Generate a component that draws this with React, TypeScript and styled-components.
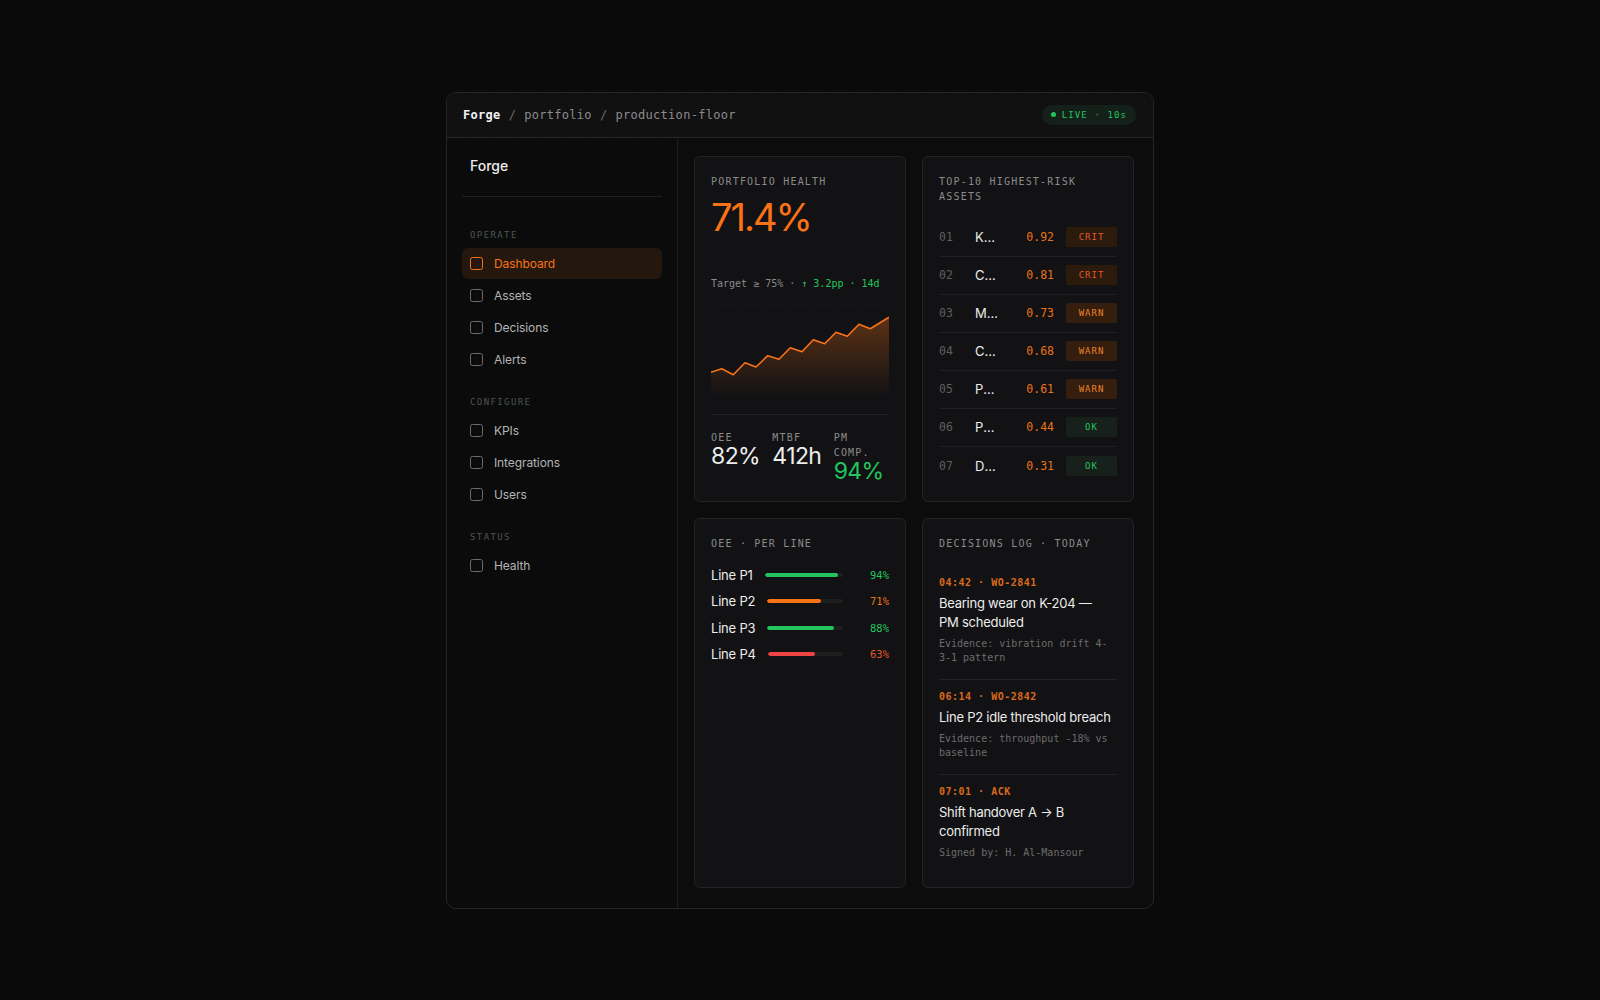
import styled, { createGlobalStyle } from 'styled-components';

const MONO = `'DejaVu Sans Mono', 'Liberation Mono', monospace`;

const GlobalStyle = createGlobalStyle`
  html, body {
    margin: 0;
    padding: 0;
    background: #0a0a0a;
  }
  body {
    font-family: Inter, 'Noto Sans', sans-serif;
    -webkit-font-smoothing: antialiased;
  }
  * {
    box-sizing: border-box;
  }
`;

const Page = styled.div`
  width: 100vw;
  height: 100vh;
  display: flex;
  align-items: center;
  justify-content: center;
`;

const Window = styled.div`
  width: 708px;
  height: 817px;
  display: flex;
  flex-direction: column;
  background: #0c0c0d;
  border: 1px solid #252926;
  border-radius: 10px;
  overflow: hidden;
`;

const TopBar = styled.div`
  height: 45px;
  flex-shrink: 0;
  display: flex;
  align-items: center;
  justify-content: space-between;
  padding: 0 17px 0 16px;
  border-bottom: 1px solid #232624;
  background: radial-gradient(rgba(255, 255, 255, 0.025) 0.7px, transparent 0.9px) 0 0 / 3px 3px,
    #101011;
`;

const Crumbs = styled.div`
  font-family: ${MONO};
  font-size: 12px;
  letter-spacing: 0.3px;
  color: #8c8c8c;
  b {
    color: #f2f2f2;
    font-weight: 700;
  }
  span {
    color: #6a6a6a;
    margin: 0 8px;
  }
`;

const LivePill = styled.div`
  height: 20px;
  display: flex;
  align-items: center;
  gap: 6px;
  padding: 0 9px;
  border-radius: 10px;
  background: #14211a;
  font-family: ${MONO};
  font-size: 9px;
  letter-spacing: 1.1px;
  color: #22c55e;
`;

const Dot = styled.i`
  width: 5px;
  height: 5px;
  border-radius: 50%;
  background: #22c55e;
`;

const Body = styled.div`
  flex: 1;
  display: flex;
  min-height: 0;
`;

const Sidebar = styled.aside`
  width: 231px;
  flex-shrink: 0;
  padding: 0 15px;
  border-right: 1px solid #1c1e1d;
  background: #0b0b0c;
`;

const Brand = styled.div`
  padding: 18px 8px 20px;
  font-size: 14px;
  line-height: 20px;
  font-weight: 500;
  color: #ececec;
  border-bottom: 1px solid #1f2120;
`;

const Nav = styled.nav`
  padding-top: 32px;
`;

const SectionLabel = styled.div<{ $first?: boolean }>`
  font-family: ${MONO};
  font-size: 9px;
  line-height: 12px;
  letter-spacing: 1.4px;
  color: #4c5650;
  padding-left: 8px;
  margin: ${(p) => (p.$first ? '0' : '21px')} 0 7px;
`;

const NavItem = styled.div<{ $active?: boolean }>`
  height: 31px;
  margin-bottom: 1px;
  display: flex;
  align-items: center;
  gap: 11px;
  padding: 0 8px;
  border-radius: 6px;
  font-size: 12px;
  letter-spacing: -0.1px;
  color: ${(p) => (p.$active ? '#f97316' : '#b3b3b3')};
  background: ${(p) => (p.$active ? '#24170e' : 'transparent')};
`;

const Box = styled.span<{ $active?: boolean }>`
  width: 13px;
  height: 13px;
  border-radius: 2.5px;
  border: 1.4px solid ${(p) => (p.$active ? '#f97316' : '#6b6b6b')};
`;

const Main = styled.main`
  flex: 1;
  min-height: 0;
  display: grid;
  grid-template-columns: 1fr 1fr;
  grid-template-rows: auto minmax(0, 1fr);
  gap: 16px;
  padding: 18px 19px 20px 16px;
`;

const Card = styled.section`
  display: flex;
  flex-direction: column;
  min-height: 0;
  padding: 17px 16px 16px;
  background: #121214;
  border: 1px solid #222325;
  border-radius: 6px;
`;

const CardLabel = styled.div`
  font-family: ${MONO};
  font-size: 10px;
  line-height: 15px;
  letter-spacing: 1.2px;
  color: #8b8b8b;
`;

const BigNumber = styled.div`
  margin-top: 9px;
  font-size: 38px;
  line-height: 1;
  letter-spacing: -2px;
  color: #f97316;
`;

const TargetLine = styled.div`
  margin-top: 41px;
  font-family: ${MONO};
  font-size: 10px;
  line-height: 14px;
  color: #8a8a8a;
  em {
    font-style: normal;
    color: #22c55e;
  }
`;

const Chart = styled.svg`
  display: block;
  margin-top: 13px;
  width: 100%;
  height: 92px;
`;

const Stats = styled.div`
  margin-top: 18px;
  padding-top: 15px;
  border-top: 1px solid #242526;
  display: grid;
  grid-template-columns: 1fr 1fr 1fr;
  gap: 6px;
  align-items: start;
`;

const StatLabel = styled.div`
  font-family: ${MONO};
  font-size: 10px;
  line-height: 15px;
  letter-spacing: 1.2px;
  color: #8b8b8b;
`;

const StatValue = styled.div<{ $tone?: string }>`
  font-size: 23px;
  line-height: 1;
  letter-spacing: -0.6px;
  color: ${(p) => p.$tone || '#ededed'};
`;

const RiskList = styled.div`
  margin-top: 15px;
`;

const RiskRow = styled.div`
  height: 38px;
  display: grid;
  grid-template-columns: 24px 22px 1fr 51px;
  column-gap: 12px;
  align-items: center;
  border-bottom: 1px solid #1f2021;
  &:last-child {
    border-bottom: none;
  }
`;

const RiskIndex = styled.span`
  font-family: ${MONO};
  font-size: 11.5px;
  color: #5e5e5e;
`;

const RiskName = styled.span`
  font-size: 13px;
  color: #ececec;
  white-space: nowrap;
  overflow: hidden;
  text-overflow: ellipsis;
`;

const RiskScore = styled.span`
  font-family: ${MONO};
  font-size: 11.5px;
  color: #ea7319;
  text-align: right;
`;

const badgeTones: Record<string, { bg: string; fg: string }> = {
  CRIT: { bg: '#34200f', fg: '#e4572b' },
  WARN: { bg: '#3f240f', fg: '#f0822a' },
  OK: { bg: '#1b2620', fg: '#22c55e' },
};

const Badge = styled.span<{ $level: string }>`
  height: 20px;
  display: flex;
  align-items: center;
  justify-content: center;
  border-radius: 2px;
  font-family: ${MONO};
  font-size: 9px;
  letter-spacing: 1px;
  color: ${(p) => badgeTones[p.$level].fg};
  background: radial-gradient(rgba(0, 0, 0, 0.25) 0.6px, transparent 0.9px) 0 0 / 2px 2px,
    ${(p) => badgeTones[p.$level].bg};
`;

const LineList = styled.div`
  margin-top: 14px;
  display: flex;
  flex-direction: column;
  gap: 6.5px;
`;

const LineRow = styled.div`
  height: 20px;
  display: flex;
  align-items: center;
  gap: 12px;
`;

const LineName = styled.span`
  font-size: 13px;
  letter-spacing: -0.2px;
  color: #ececec;
  white-space: nowrap;
`;

const Track = styled.div`
  flex: 1;
  height: 4px;
  border-radius: 2px;
  background: #1d1f1e;
  overflow: hidden;
`;

const Fill = styled.div<{ $color: string }>`
  height: 100%;
  border-radius: 2px;
  background: ${(p) => p.$color};
`;

const LinePct = styled.span<{ $color: string }>`
  width: 34px;
  text-align: right;
  font-family: ${MONO};
  font-size: 10.5px;
  color: ${(p) => p.$color};
`;

const LogList = styled.div`
  margin-top: 15px;
`;

const LogEntry = styled.div`
  padding: 10px 0 13px;
  border-bottom: 1px solid #232425;
  &:last-child {
    border-bottom: none;
  }
`;

const LogMeta = styled.div`
  font-family: ${MONO};
  font-size: 10px;
  line-height: 14px;
  letter-spacing: 0.5px;
  font-weight: 700;
  color: #d9691c;
`;

const LogTitle = styled.div`
  margin-top: 4px;
  padding-right: 4px;
  font-size: 13px;
  line-height: 19px;
  letter-spacing: -0.25px;
  color: #ececec;
`;

const LogNote = styled.div`
  margin-top: 5px;
  font-family: ${MONO};
  font-size: 10px;
  line-height: 14.5px;
  color: #6c6c6c;
`;

const sections = [
  { label: 'OPERATE', items: ['Dashboard', 'Assets', 'Decisions', 'Alerts'] },
  { label: 'CONFIGURE', items: ['KPIs', 'Integrations', 'Users'] },
  { label: 'STATUS', items: ['Health'] },
];

const risks = [
  { id: '01', name: 'Kneader K-204', score: '0.92', level: 'CRIT' },
  { id: '02', name: 'Compressor C-11', score: '0.81', level: 'CRIT' },
  { id: '03', name: 'Mixer M-07', score: '0.73', level: 'WARN' },
  { id: '04', name: 'Conveyor C-3', score: '0.68', level: 'WARN' },
  { id: '05', name: 'Press P-12', score: '0.61', level: 'WARN' },
  { id: '06', name: 'Pump P-02', score: '0.44', level: 'OK' },
  { id: '07', name: 'Dryer D-1', score: '0.31', level: 'OK' },
];

const lines = [
  { name: 'Line P1', pct: 94, bar: '#22c55e', text: '#22c55e' },
  { name: 'Line P2', pct: 71, bar: '#f97316', text: '#ea7319' },
  { name: 'Line P3', pct: 88, bar: '#22c55e', text: '#22c55e' },
  { name: 'Line P4', pct: 63, bar: '#ef4444', text: '#e4572b' },
];

const decisions = [
  {
    meta: '04:42 · WO-2841',
    title: 'Bearing wear on K-204 — PM scheduled',
    note: 'Evidence: vibration drift 4-3-1 pattern',
  },
  {
    meta: '06:14 · WO-2842',
    title: 'Line P2 idle threshold breach',
    note: 'Evidence: throughput -18% vs baseline',
  },
  {
    meta: '07:01 · ACK',
    title: 'Shift handover A → B confirmed',
    note: 'Signed by: H. Al-Mansour',
  },
];

const trend = [
  [0, 68.3], [10.7, 64.7], [22.3, 70.7], [34, 58.7], [45, 63], [56.7, 51.7],
  [68, 55.3], [79.3, 43.7], [91, 47.7], [102.3, 35.7], [113.7, 39.7], [125, 28.3],
  [136.3, 32.3], [148, 20.3], [159.3, 24.7], [178, 13.3],
];

const HealthChart = () => {
  const line = trend.map(([x, y], i) => `${i ? 'L' : 'M'}${x} ${y}`).join(' ');
  const area = `${line} L178 92 L0 92 Z`;
  return (
    <Chart viewBox="0 0 178 92" preserveAspectRatio="none">
      <defs>
        <linearGradient id="healthFill" x1="0" y1="0" x2="0" y2="1">
          <stop offset="0%" stopColor="#f97316" stopOpacity="0.32" />
          <stop offset="100%" stopColor="#f97316" stopOpacity="0" />
        </linearGradient>
      </defs>
      <line x1="0" y1="1" x2="178" y2="1" stroke="#ffffff" strokeOpacity="0.05" strokeDasharray="1 2" />
      <path d={area} fill="url(#healthFill)" />
      <path d={line} fill="none" stroke="#f97316" strokeWidth="1.6" strokeLinejoin="round" />
    </Chart>
  );
};

export default function App() {
  return (
    <>
      <GlobalStyle />
      <Page>
        <Window>
          <TopBar>
            <Crumbs>
              <b>Forge</b>
              <span>/</span>portfolio<span>/</span>production-floor
            </Crumbs>
            <LivePill>
              <Dot />
              LIVE · 10s
            </LivePill>
          </TopBar>
          <Body>
            <Sidebar>
              <Brand>Forge</Brand>
              <Nav>
                {sections.map((s, si) => (
                  <div key={s.label}>
                    <SectionLabel $first={si === 0}>{s.label}</SectionLabel>
                    {s.items.map((item) => {
                      const active = item === 'Dashboard';
                      return (
                        <NavItem key={item} $active={active}>
                          <Box $active={active} />
                          {item}
                        </NavItem>
                      );
                    })}
                  </div>
                ))}
              </Nav>
            </Sidebar>
            <Main>
              <Card>
                <CardLabel>PORTFOLIO HEALTH</CardLabel>
                <BigNumber>71.4%</BigNumber>
                <TargetLine>
                  Target ≥ 75% · <em>↑ 3.2pp · 14d</em>
                </TargetLine>
                <HealthChart />
                <Stats>
                  <div>
                    <StatLabel>OEE</StatLabel>
                    <StatValue>82%</StatValue>
                  </div>
                  <div>
                    <StatLabel>MTBF</StatLabel>
                    <StatValue>412h</StatValue>
                  </div>
                  <div>
                    <StatLabel>PM COMP.</StatLabel>
                    <StatValue $tone="#22c55e">94%</StatValue>
                  </div>
                </Stats>
              </Card>
              <Card>
                <CardLabel>TOP-10 HIGHEST-RISK ASSETS</CardLabel>
                <RiskList>
                  {risks.map((r) => (
                    <RiskRow key={r.id}>
                      <RiskIndex>{r.id}</RiskIndex>
                      <RiskName>{r.name}</RiskName>
                      <RiskScore>{r.score}</RiskScore>
                      <Badge $level={r.level}>{r.level}</Badge>
                    </RiskRow>
                  ))}
                </RiskList>
              </Card>
              <Card>
                <CardLabel>OEE · PER LINE</CardLabel>
                <LineList>
                  {lines.map((l) => (
                    <LineRow key={l.name}>
                      <LineName>{l.name}</LineName>
                      <Track>
                        <Fill $color={l.bar} style={{ width: `${l.pct}%` }} />
                      </Track>
                      <LinePct $color={l.text}>{l.pct}%</LinePct>
                    </LineRow>
                  ))}
                </LineList>
              </Card>
              <Card>
                <CardLabel>DECISIONS LOG · TODAY</CardLabel>
                <LogList>
                  {decisions.map((d) => (
                    <LogEntry key={d.meta}>
                      <LogMeta>{d.meta}</LogMeta>
                      <LogTitle>{d.title}</LogTitle>
                      <LogNote>{d.note}</LogNote>
                    </LogEntry>
                  ))}
                </LogList>
              </Card>
            </Main>
          </Body>
        </Window>
      </Page>
    </>
  );
}
